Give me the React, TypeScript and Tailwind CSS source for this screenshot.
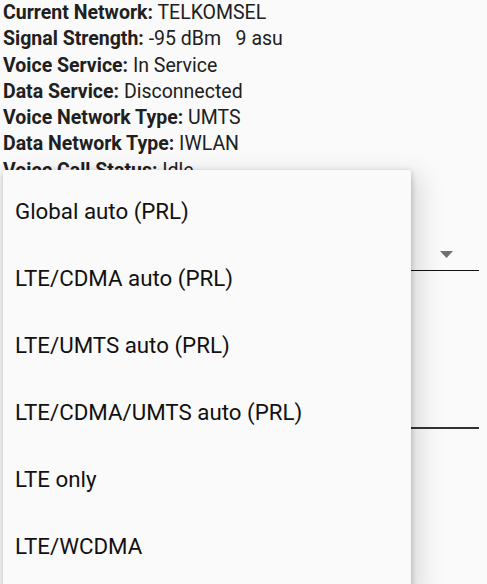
const info: [string, string][] = [
  ['Current Network:', 'TELKOMSEL'],
  ['Signal Strength:', '-95 dBm   9 asu'],
  ['Voice Service:', 'In Service'],
  ['Data Service:', 'Disconnected'],
  ['Voice Network Type:', 'UMTS'],
  ['Data Network Type:', 'IWLAN'],
  ['Voice Call Status:', 'Idle'],
]

const options = [
  'Global auto (PRL)',
  'LTE/CDMA auto (PRL)',
  'LTE/UMTS auto (PRL)',
  'LTE/CDMA/UMTS auto (PRL)',
  'LTE only',
  'LTE/WCDMA',
]

export default function App() {
  return (
    <div className="relative w-[487px] h-[584px] overflow-hidden bg-[#fafafa] font-['Roboto',sans-serif]">
      {/* status lines */}
      <div className="pl-[3px] text-[19.5px] leading-[26.3px] text-[#202020]">
        {info.map(([k, v]) => (
          <div key={k} className="whitespace-pre">
            <span className="font-bold">{k}</span> {v}
          </div>
        ))}
      </div>

      {/* spinners behind the menu */}
      <div className="ml-[20px] mr-[8px] mt-[49px] h-[38px] border-b border-[#111] flex items-center justify-end pr-[26px]">
        <svg width="13" height="7" viewBox="0 0 13 7" className="mb-[-6px]">
          <path d="M0 0h13L6.5 7z" fill="#707070" />
        </svg>
      </div>
      <div className="ml-[20px] mr-[8px] mt-[120px] h-[38px] border-b-2 border-[#333]" />

      {/* popup menu */}
      <div className="absolute left-[3px] top-[170px] w-[408px] h-[430px] bg-[#fafafa] py-2 shadow-[0_2px_6px_rgba(0,0,0,0.25),10px_4px_24px_rgba(0,0,0,0.12)] rounded-[2px]">
        {options.map((o) => (
          <div key={o} className="h-[67px] flex items-center pl-[12px] text-[22.3px] text-[#111]">
            {o}
          </div>
        ))}
      </div>
    </div>
  )
}
